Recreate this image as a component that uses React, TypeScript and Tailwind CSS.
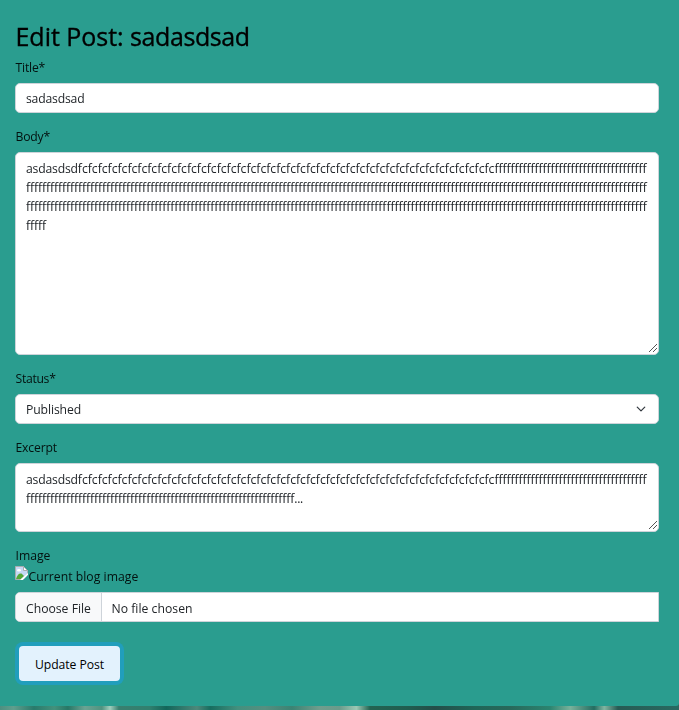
import type { ReactNode } from 'react';

const field = 'relative block w-[644px] rounded-[5px] border border-[#ced4da] bg-white px-[10px] text-[#212529] will-change-transform';

function Grip() {
  return (
    <svg className="absolute right-0 bottom-0 size-[11px]" viewBox="0 0 11 11" shapeRendering="crispEdges">
      <path d="M1.5 9.5 9.5 1.5M5.5 9.5 9.5 5.5" stroke="#555" fill="none" />
    </svg>
  );
}

function Opening() {
  return (
    <div className="h-[19px] whitespace-nowrap">
      <span className="tracking-[-0.19px]">asdasdsd</span>
      <span className="tracking-[-0.01px]">{'fc'.repeat(42)}</span>
      <span className="tracking-[-0.095px]">{'f'.repeat(38)}</span>
    </div>
  );
}

function Run({ count, tail = '' }: { count: number; tail?: string }) {
  return (
    <div className="h-[19px] tracking-[-0.096px] whitespace-nowrap">
      {'f'.repeat(count)}
      <span className="tracking-[-0.3px]">{tail}</span>
    </div>
  );
}

function Label({ children, className }: { children: ReactNode; className: string }) {
  return <div className={`h-[19px] pl-[0.5px] whitespace-nowrap text-[#03110f] will-change-transform ${className}`}>{children}</div>;
}

export default function App() {
  return (
    <div className="flex h-[710px] w-[679px] flex-col overflow-hidden bg-[#286b60] font-['Open_Sans','Noto_Sans',sans-serif] text-[12.2px] leading-[19px]">
      <main className="h-[706px] rounded-br-[3px] bg-[#2a9d8f] pl-[15px]">
        <h1 className="h-[58px] pt-[21px] text-[25px] leading-[31px] font-medium whitespace-nowrap text-black will-change-transform [-webkit-text-stroke:0.35px_black]">
          <span className="ml-[0.5px] tracking-[-0.03px]">Edit Post: </span>
          <span className="tracking-[-0.4px]">sadasdsad</span>
        </h1>
        <Label className="tracking-[-0.2px]">Title*</Label>
        <div className={`${field} mt-[6px] h-[30px] pt-[5px] tracking-[-0.19px]`}>sadasdsad</div>

        <Label className="mt-[14px] tracking-[-0.2px]">Body*</Label>
        <div className={`${field} mt-[6px] h-[203px] pt-[6px]`}>
          <Opening />
          <Run count={155} />
          <Run count={155} />
          <Run count={5} />
          <Grip />
        </div>

        <Label className="mt-[14px] tracking-[-0.3px]">Status*</Label>
        <div className={`${field} mt-[6px] flex h-[30px] items-center justify-between tracking-[-0.1px]`}>
          Published
          <svg className="mr-[2px] size-[10px]" viewBox="0 0 16 16" fill="none">
            <path d="m2 5 6 6 6-6" stroke="#343a40" strokeWidth="2" strokeLinecap="round" strokeLinejoin="round" />
          </svg>
        </div>

        <Label className="mt-[14px] tracking-[-0.15px]">Excerpt</Label>
        <div className={`${field} mt-[6px] h-[69px] pt-[6px]`}>
          <Opening />
          <Run count={67} tail="..." />
          <Grip />
        </div>

        <Label className="mt-[14px]">Image</Label>
        <div className="mt-[2px] flex h-[19px] text-[#03110f] will-change-transform">
          <svg className="-mt-px h-[14px] w-[13px]" viewBox="0 0 13 14">
            <path d="M.5.5h8l4 4v9H.5z" fill="#c6d8f5" stroke="#a9adb0" />
            <path d="M8.5.5v4h4z" fill="#fff" stroke="#a9adb0" />
            <ellipse cx="4" cy="4.3" rx="2" ry="1.3" fill="#fff" />
            <path d="M1 13c1-4 3-6 5.5-5.5L9 10l-3 3z" fill="#55a936" />
            <path d="m5 14 8-7v2l-5 5z" fill="#fff" />
            <path d="m8 14 5-5v5z" fill="#2a9d8f" />
          </svg>
          <span className="pl-[0.5px] tracking-[0.04px] whitespace-nowrap">Current blog image</span>
        </div>
        <div className="mt-[6px] flex h-[30px] w-[644px] overflow-hidden rounded-l-[5px] border border-[#ced4da] bg-white pt-px leading-[29px] text-[#212529] will-change-transform">
          <span className="-mt-px w-[86px] border-r border-[#ced4da] bg-[#f8f9fa] pt-px pl-[10px] whitespace-nowrap">Choose File</span>
          <span className="pl-[9.5px] tracking-[0.02px] whitespace-nowrap">No file chosen</span>
        </div>
        <button className="mt-[24px] ml-[4px] block h-[35px] w-[101px] rounded-[4px] bg-[#e3f2fd] pt-px tracking-[-0.06px] whitespace-nowrap text-black shadow-[0_0_0_4px_#219ebc]">
          Update Post
        </button>
      </main>
      <div className="h-[4px] bg-[linear-gradient(90deg,#4d8f80_0%,#609e8d_2%,#297a6b_5%,#43917c_8%,#277766_10%,#6ba393_12.5%,#509380_15%,#a0cebd_16.2%,#397f6f_17.5%,#31806f_22%,#12665a_24.5%,#4d887a_29%,#176d5f_31%,#43907e_35%,#568f80_39%,#3b8373_43%,#709d8d_47%,#6a9b8b_50%,#9cc8b4_52.5%,#236351_54.5%,#205e50_60%,#244e49_64%,#1f6658_70%,#28685a_75%,#2b8470_81%,#79b19b_84%,#246d61_87.5%,#82b5a1_89%,#275b54_91%,#286a61_100%)]" />
    </div>
  );
}
